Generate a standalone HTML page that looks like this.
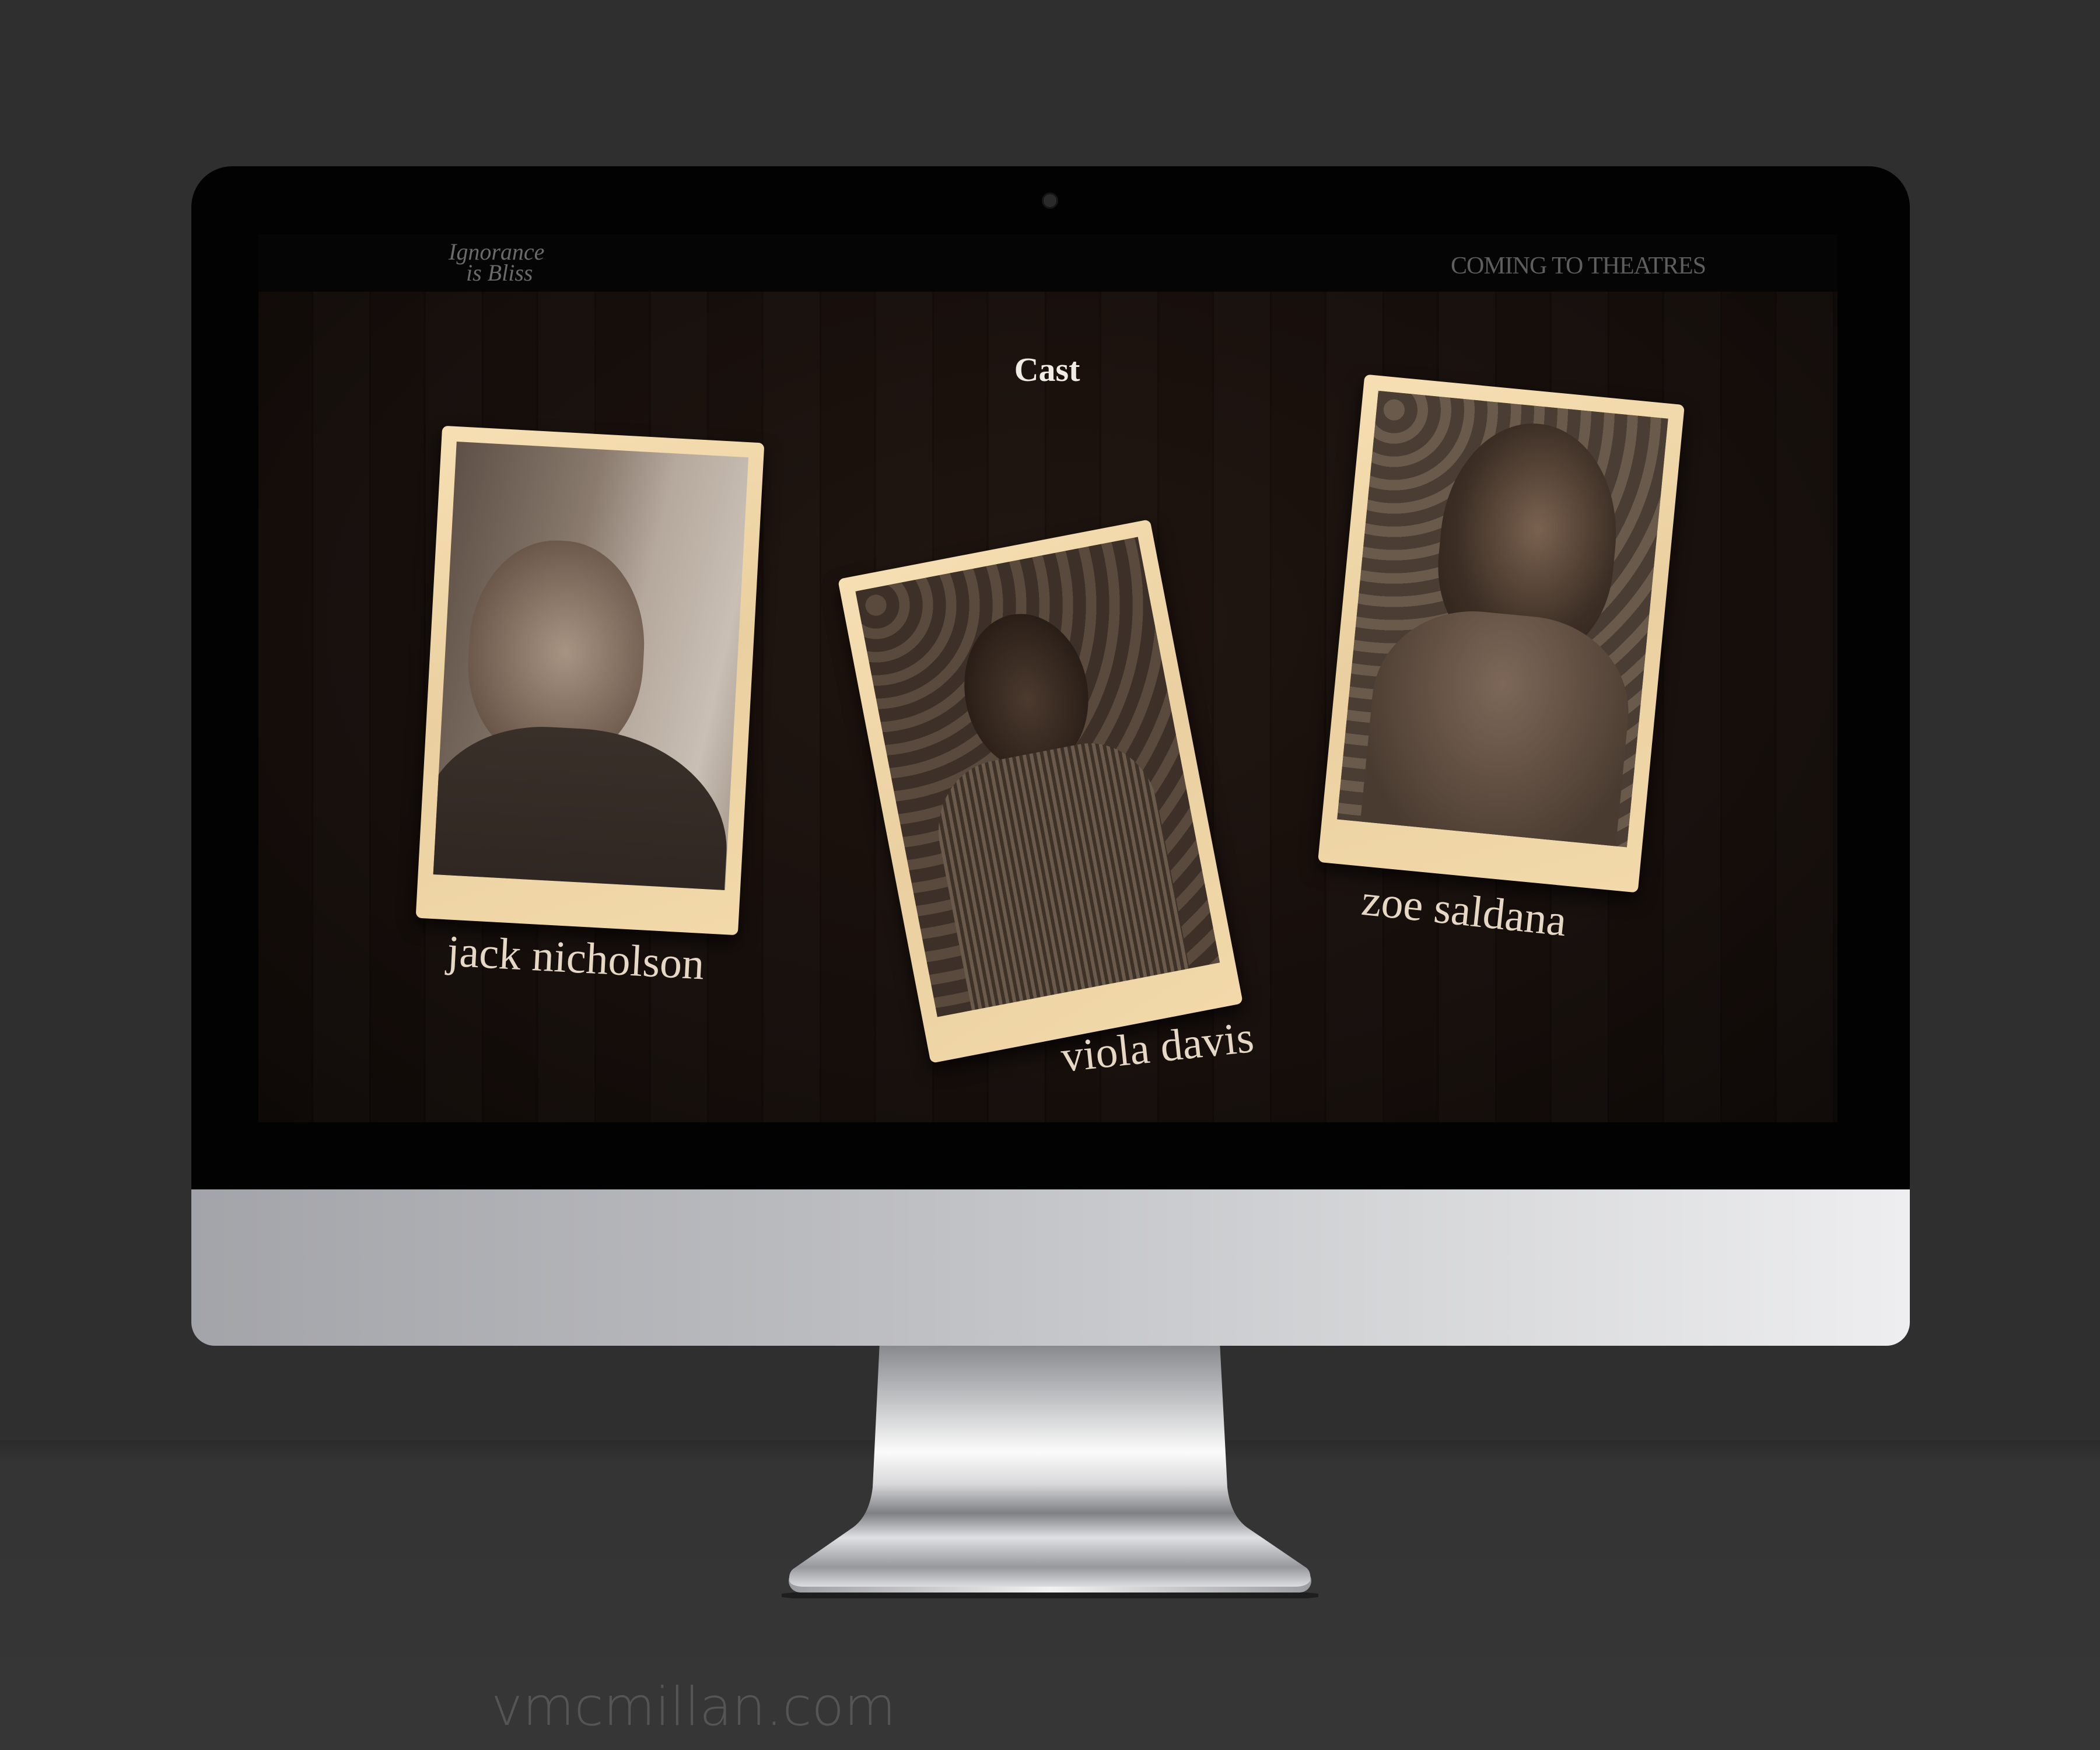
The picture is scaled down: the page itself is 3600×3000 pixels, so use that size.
<!DOCTYPE html>
<html><head><meta charset="utf-8"><style>
*{margin:0;padding:0;box-sizing:border-box}
body{width:3600px;height:3000px;overflow:hidden;background:#2f2f2f;position:relative;font-family:"Liberation Serif",serif}
.abs{position:absolute}
#floor{left:0;top:2469px;width:3600px;height:531px;background:linear-gradient(#2b2b2b,#343434 40px,#363636)}
#mon{left:328px;top:285px;width:2946px;height:2022px;background:#020202;border-radius:70px 70px 40px 40px;overflow:hidden}
#chin{left:0;top:1754px;width:2946px;height:268px;background:linear-gradient(90deg,#a3a4a9,#bdbec2 40%,#d5d6d8 70%,#eeeef0)}
#cam{left:1458px;top:45px;width:28px;height:28px;border-radius:50%;background:#2a2a2a;border:3px solid #151515}
#hdr{left:115px;top:117px;width:2707px;height:98px;background:#050505}
#wood{left:115px;top:215px;width:2707px;height:1424px;overflow:hidden;
background:
repeating-linear-gradient(90deg,rgba(0,0,0,0) 0 90px,rgba(0,0,0,.15) 90px 94px,rgba(255,255,255,0.01) 94px 190px,rgba(0,0,0,.18) 190px 193px),
radial-gradient(ellipse at 50% 40%,#1f140f,#140d0a 70%,#0e0907);}
.ph{position:absolute;background:linear-gradient(160deg,#f6dfb3,#ead0a0 50%,#f2d9aa);border-radius:10px;box-shadow:0 14px 30px rgba(0,0,0,.7)}
.in{position:absolute;left:26px;top:26px;right:26px;bottom:76px;overflow:hidden}
.nm{position:absolute;width:700px;height:110px;text-align:center;color:#e6d8c4;font-size:76px;white-space:nowrap;line-height:110px}
</style></head><body>
<div id="floor" class="abs"></div>
<svg class="abs" style="left:1340px;top:2300px" width="920" height="440" viewBox="0 0 920 440">
<defs>
<linearGradient id="ng" x1="0" y1="0" x2="0" y2="1">
<stop offset="0" stop-color="#85868a"/><stop offset=".25" stop-color="#c5c6c8"/><stop offset=".45" stop-color="#fbfbfb"/><stop offset=".58" stop-color="#d9d9db"/><stop offset=".7" stop-color="#7f8084"/><stop offset=".8" stop-color="#dfe0e2"/><stop offset=".92" stop-color="#97989c"/><stop offset="1" stop-color="#dcdde0"/></linearGradient>
<linearGradient id="bg2" x1="0" x2="1"><stop offset="0" stop-color="#9c9da1"/><stop offset=".5" stop-color="#f2f2f2"/><stop offset="1" stop-color="#9c9da1"/></linearGradient>
</defs>
<ellipse cx="460" cy="435" rx="470" ry="14" fill="#151515" opacity=".7"/>
<rect x="12" y="390" width="896" height="40" rx="20" fill="url(#bg2)"/>
<path d="M168 0 L751 0 L764 250 Q770 300 800 320 L900 388 Q908 395 906 410 Q900 420 880 420 L40 420 Q14 420 13 408 Q12 394 22 388 L120 320 Q150 300 156 250 Z" fill="url(#ng)"/>
</svg>
<div id="mon" class="abs">
<div id="cam" class="abs"></div>
<div id="hdr" class="abs">
<div class="abs" style="left:326px;top:12px;color:#6a6a6a;font-style:italic;font-size:40px;line-height:36px">Ignorance<br>&nbsp;&nbsp;&nbsp;is Bliss</div>
<div class="abs" style="left:2044px;top:30px;color:#5e5e5e;font-size:42px;letter-spacing:-1px">COMING TO THEATRES</div>
</div>
<div id="wood" class="abs">
<div class="abs" style="left:1152px;top:100px;width:400px;text-align:center;color:#f0ebe4;font-size:58px;font-weight:bold">Cast</div>
<div class="ph" style="left:292px;top:244px;width:553px;height:845px;transform:rotate(3.1deg)">
<div class="in" style="background:linear-gradient(100deg,#5e5046 0%,#8a7b6e 40%,#b5a89c 60%,#c9bfb4 85%,#a79a8e)">
<div class="abs" style="left:40px;top:160px;width:300px;height:380px;border-radius:48% 48% 45% 45%;background:radial-gradient(ellipse at 55% 50%,#a89483,#6d5a4c 70%,#4a3d33)"></div>
<div class="abs" style="left:-20px;top:480px;width:520px;height:400px;border-radius:40% 50% 0 0;background:linear-gradient(#3a302a,#2a221d)"></div>
</div></div>
<div class="nm" style="left:194px;top:1087px;transform:rotate(3deg)">jack nicholson</div>
<div class="ph" style="left:1068px;top:434px;width:545px;height:845px;transform:rotate(-10.9deg)">
<div class="in" style="background:repeating-radial-gradient(circle at 30px 30px,#5a4a3d 0 18px,#3c3028 18px 40px),#4a3c31">
<div class="abs" style="left:150px;top:90px;width:210px;height:270px;border-radius:50%;background:radial-gradient(ellipse at 50% 55%,#4c3a2e,#2a1f18 70%)"></div>
<div class="abs" style="left:60px;top:330px;width:380px;height:420px;border-radius:30% 30% 0 0;background:repeating-linear-gradient(90deg,#6a5a4c 0 6px,#3e3128 6px 12px)"></div>
</div></div>
<div class="nm" style="left:1191px;top:1240px;transform:rotate(-6deg)">viola davis</div>
<div class="ph" style="left:1855px;top:166px;width:551px;height:840px;transform:rotate(5.5deg)">
<div class="in" style="background:repeating-radial-gradient(circle at 30px 30px,#6a5a4c 0 18px,#4a3d33 18px 40px),#574838">
<div class="abs" style="left:130px;top:30px;width:300px;height:400px;border-radius:50% 50% 40% 40%;background:radial-gradient(ellipse at 55% 45%,#7a6250,#3c2e24 60%,#2a1f18)"></div>
<div class="abs" style="left:40px;top:360px;width:440px;height:400px;border-radius:40% 40% 0 0;background:radial-gradient(ellipse at 50% 30%,#7d6858,#4a3b30 80%)"></div>
</div></div>
<div class="nm" style="left:1717px;top:1006px;transform:rotate(6deg)">zoe saldana</div>
</div>
<div id="chin" class="abs"></div>
</div>
<div class="abs" style="left:842px;top:2874px;color:#555;font-family:'DejaVu Sans','Liberation Sans',sans-serif;font-weight:200;font-size:91px">vmcmillan.com</div>
</body></html>
